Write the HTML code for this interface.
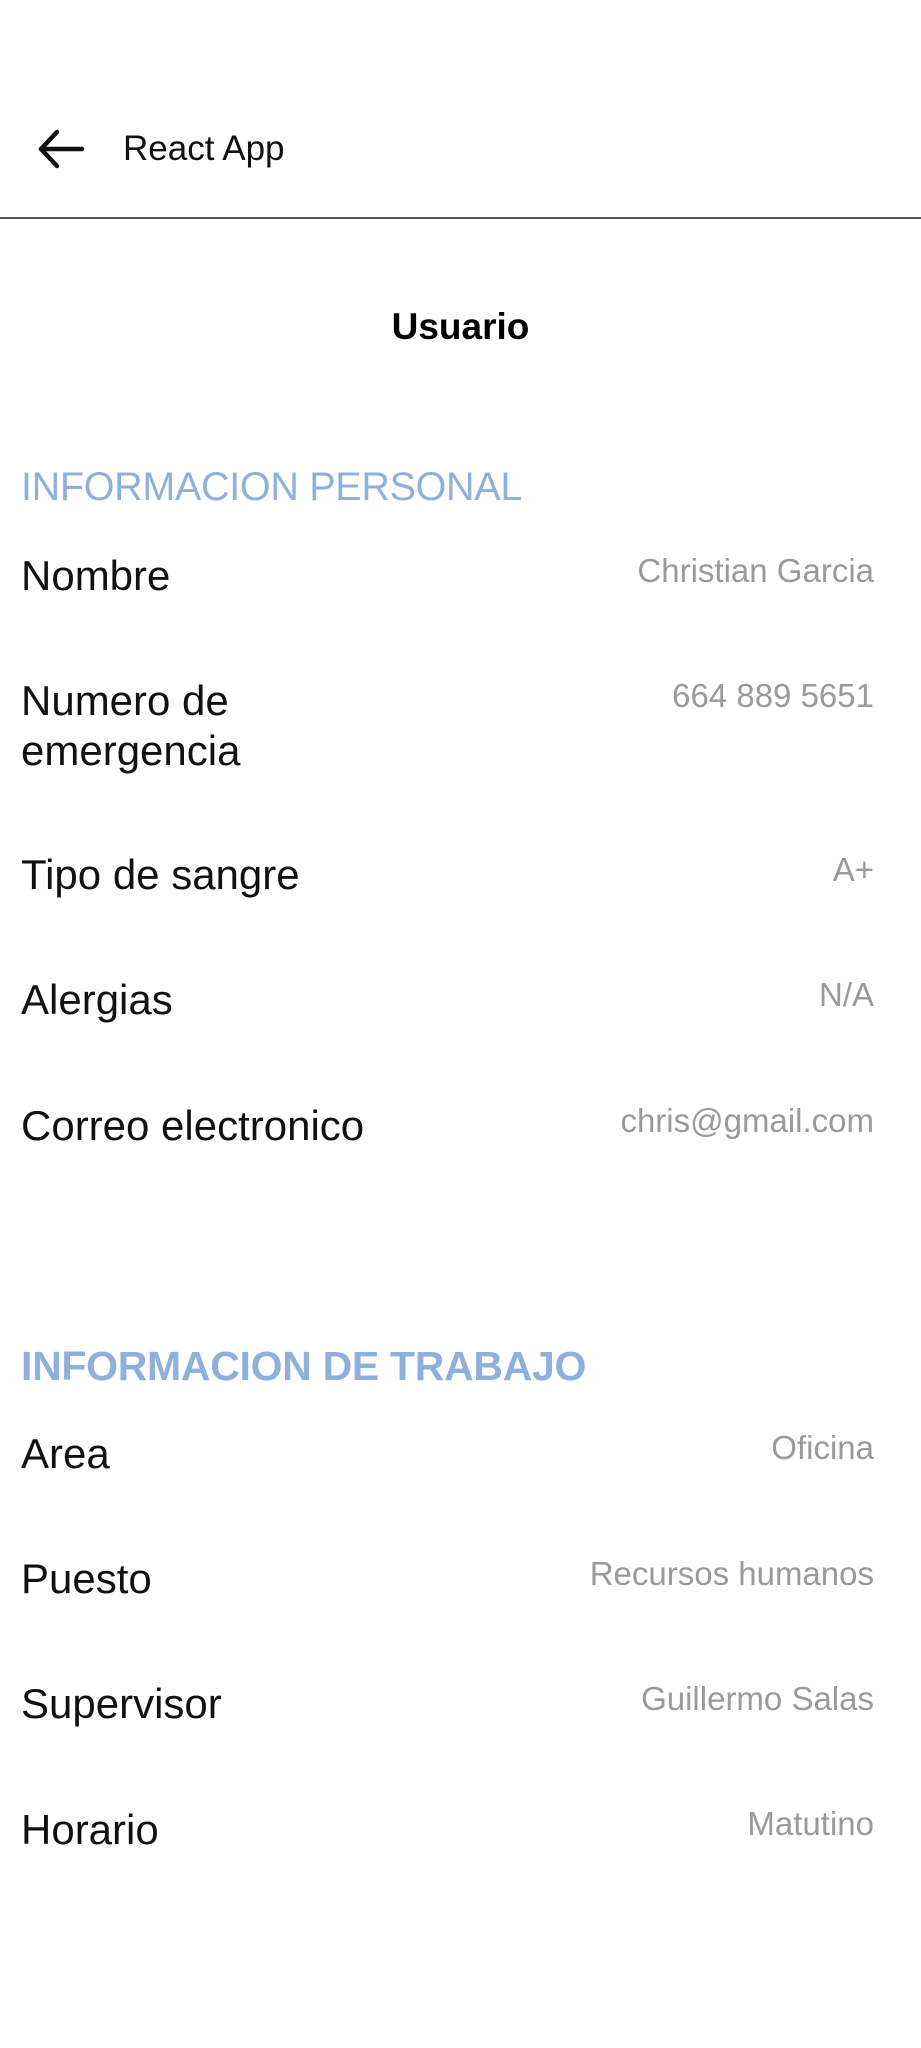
<!DOCTYPE html>
<html><head><meta charset="utf-8"><style>
body{margin:0;width:921px;height:2048px;background:#fff;position:relative;overflow:hidden;font-family:"Liberation Sans",sans-serif;}
.a{position:absolute;white-space:nowrap;line-height:44px;}
.l{left:21px;font-size:42px;color:#111;}
.v{right:47px;font-size:33px;color:#9a9a9a;}
.h{left:21px;font-size:39.5px;color:#8fb0dc;letter-spacing:-0.3px;}
</style></head><body>
<svg style="position:absolute;left:36px;top:128px" width="50" height="42" viewBox="0 0 50 42"><path d="M46 21H6M21 4L5 21l16 17" fill="none" stroke="#111" stroke-width="4.5" stroke-linecap="round" stroke-linejoin="round"/></svg>
<div class="a" style="left:123px;top:127px;font-size:35px;color:#111">React App</div>
<div style="position:absolute;left:0;top:217px;width:921px;height:2px;background:#555"></div>
<div class="a" style="left:0;width:921px;text-align:center;top:305px;font-size:37px;font-weight:bold;color:#000">Usuario</div>
<div class="a h" style="top:465px">INFORMACION PERSONAL</div>
<div class="a l" style="top:554px">Nombre</div><div class="a v" style="top:549px">Christian Garcia</div>
<div class="a l" style="top:679px">Numero de</div><div class="a l" style="top:729px">emergencia</div><div class="a v" style="top:674px">664 889 5651</div>
<div class="a l" style="top:853px">Tipo de sangre</div><div class="a v" style="top:848px">A+</div>
<div class="a l" style="top:978px">Alergias</div><div class="a v" style="top:973px">N/A</div>
<div class="a l" style="top:1104px">Correo electronico</div><div class="a v" style="top:1099px">chris@gmail.com</div>
<div class="a h" style="top:1344px;font-size:41px;font-weight:bold">INFORMACION DE TRABAJO</div>
<div class="a l" style="top:1432px">Area</div><div class="a v" style="top:1426px">Oficina</div>
<div class="a l" style="top:1557px">Puesto</div><div class="a v" style="top:1552px">Recursos humanos</div>
<div class="a l" style="top:1682px">Supervisor</div><div class="a v" style="top:1677px">Guillermo Salas</div>
<div class="a l" style="top:1808px">Horario</div><div class="a v" style="top:1802px">Matutino</div>
</body></html>
